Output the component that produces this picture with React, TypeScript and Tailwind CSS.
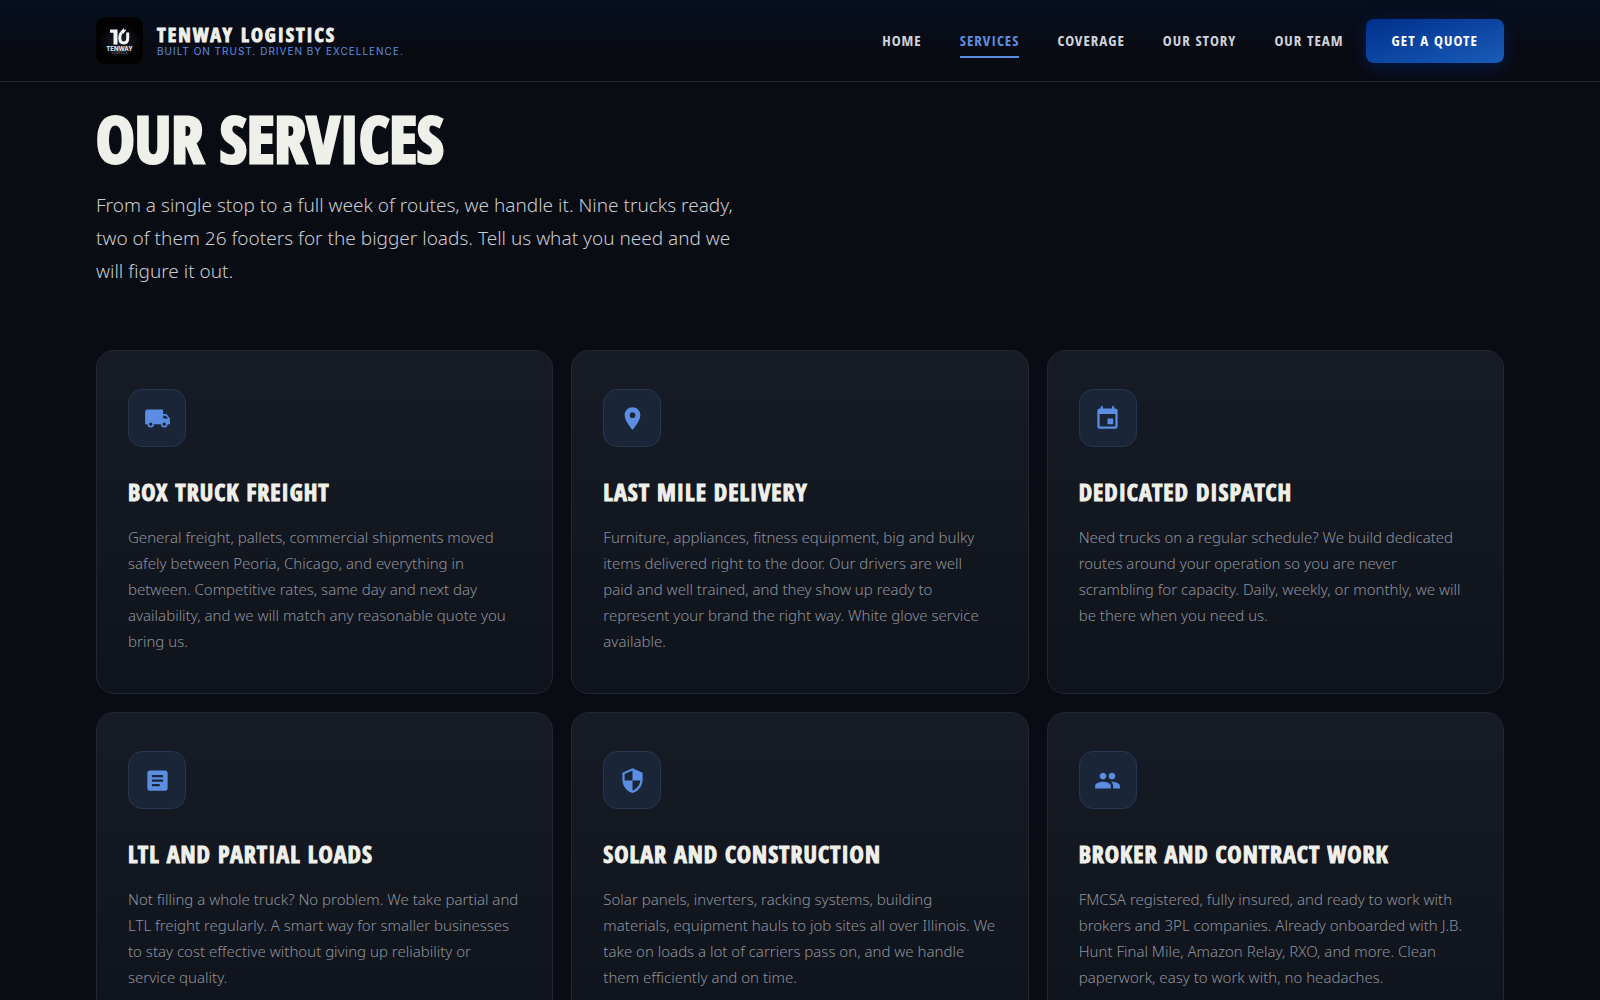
import type { IconType } from "react-icons";
import { MdArticle, MdEvent, MdLocalShipping, MdPeople, MdPlace, MdSecurity } from "react-icons/md";

interface Service {
  title: string;
  body: string;
  icon: IconType;
}

const NAV = ["Home", "Services", "Coverage", "Our Story", "Our Team"];
const ACTIVE = "Services";

const SERVICES: Service[] = [
  {
    title: "Box Truck Freight",
    icon: MdLocalShipping,
    body: "General freight, pallets, commercial shipments moved safely between Peoria, Chicago, and everything in between. Competitive rates, same day and next day availability, and we will match any reasonable quote you bring us.",
  },
  {
    title: "Last Mile Delivery",
    icon: MdPlace,
    body: "Furniture, appliances, fitness equipment, big and bulky items delivered right to the door. Our drivers are well\npaid and well trained, and they show up ready to represent your brand the right way. White glove service available.",
  },
  {
    title: "Dedicated Dispatch",
    icon: MdEvent,
    body: "Need trucks on a regular schedule? We build dedicated routes around your operation so you are never scrambling for capacity. Daily, weekly, or monthly, we will be there when you need us.",
  },
  {
    title: "LTL and Partial Loads",
    icon: MdArticle,
    body: "Not filling a whole truck? No problem. We take partial and LTL freight regularly. A smart way for smaller businesses to stay cost effective without giving up reliability or service quality.",
  },
  {
    title: "Solar and Construction",
    icon: MdSecurity,
    body: "Solar panels, inverters, racking systems, building materials, equipment hauls to job sites all over Illinois. We take on loads a lot of carriers pass on, and we handle them efficiently and on time.",
  },
  {
    title: "Broker and Contract Work",
    icon: MdPeople,
    body: "FMCSA registered, fully insured, and ready to work with brokers and 3PL companies. Already onboarded with J.B. Hunt Final Mile, Amazon Relay, RXO, and more. Clean paperwork, easy to work with, no headaches.",
  },
];

function Logo() {
  return (
    <svg viewBox="0 0 47 47" className="h-[47px] w-[47px] shrink-0" role="img" aria-label="Tenway Logistics">
      <defs>
        <radialGradient id="logo-glow">
          <stop offset="0" stopColor="#1d2230" />
          <stop offset="1" stopColor="#020203" />
        </radialGradient>
      </defs>
      <rect width="47" height="47" rx="9" fill="#020203" />
      <ellipse cx="24" cy="24" rx="21" ry="16" fill="url(#logo-glow)" />
      {/* emblem: post and open ring with an arrow tip */}
      <path d="M14 12.500h7.500V27.500h-4V15.700H14z" fill="#f4f4f4" />
      <path d="M25.500 15.500c-1.300 1.200-1.700 3-1.700 5.500 0 3.200 1.400 5 4 5s3.900-1.800 3.900-5v-5.500" fill="none" stroke="#f4f4f4" strokeWidth="3" />
      <path d="M24.500 14.500l3.500-3.500v1.800h2.500l-3.500 4.200z" fill="#f4f4f4" />
      <text x="23.500" y="33.500" textAnchor="middle" fontSize="6" className="font-['Inter',sans-serif] font-bold" fill="#f4f4f4">
        TENWAY
      </text>
      <text x="23.500" y="37" textAnchor="middle" fontSize="3" className="font-['Inter',sans-serif]" fill="#8d9099">
        LOGISTICS
      </text>
    </svg>
  );
}

function Header() {
  return (
    <header className="sticky top-0 z-10 border-b border-[#22262f] bg-linear-to-b from-[#050f20] to-[#090b13] to-60%">
      <div className="flex h-[81px] items-center justify-between px-[6%]">
        <a href="#home" className="flex items-center gap-3.5">
          <Logo />
          <span className="flex flex-col">
            <span className="font-['Open_Sans_Condensed',sans-serif] text-[20px] leading-5 font-bold tracking-[2px] text-[#f0f0ea] uppercase [-webkit-text-stroke:1px_#f0f0ea]">
              Tenway Logistics
            </span>
            <span className="font-['Inter',sans-serif] text-[10px] leading-3 tracking-[1px] text-[#5b8ee0] uppercase">
              Built on trust. Driven by excellence.
            </span>
          </span>
        </a>
        <div className="flex items-center gap-[22px]">
          <nav className="flex gap-[38px]">
            {NAV.map((item) => (
              <a
                key={item}
                href={`#${item.toLowerCase().replace(" ", "-")}`}
                className={`border-b-2 py-1.5 font-['Open_Sans_Condensed',sans-serif] text-[15px] leading-5 font-bold tracking-[1px] uppercase ${
                  item === ACTIVE ? "border-[#5b8ee0] text-[#5b8ee0]" : "border-transparent text-[#d0d3d9]"
                }`}
              >
                {item}
              </a>
            ))}
          </nav>
          <button className="h-11 rounded-lg bg-linear-to-br from-[#032f8d] to-[#1a5cb8] px-[26px] font-['Open_Sans_Condensed',sans-serif] text-[15px] font-bold tracking-[1px] text-white uppercase shadow-[0_4px_16px_rgba(0,51,153,0.4)]">
            Get a Quote
          </button>
        </div>
      </div>
    </header>
  );
}

function ServiceCard({ title, body, icon: Icon }: Service) {
  return (
    <article className="rounded-[18px] border border-[#222833] bg-linear-to-b from-[#171b25] to-[#0f131b] px-[31px] pt-[38px] pb-[39px]">
      <div className="flex h-[58px] w-[58px] items-center justify-center rounded-[14px] border border-[#26364f] bg-[#1a2538] text-[#5b8ee0]">
        <Icon size={27} />
      </div>
      <h2 className="mt-[31px] font-['Open_Sans_Condensed',sans-serif] text-2xl leading-7 font-bold tracking-[1px] text-[#f0f0ea] uppercase [-webkit-text-stroke:1px_#f0f0ea]">
        {title}
      </h2>
      <p className="mt-[18px] font-['Noto_Sans',sans-serif] text-[15px] leading-[26px] font-light whitespace-pre-line text-[#8d929c]">
        {body}
      </p>
    </article>
  );
}

export default function App() {
  return (
    <div className="min-h-screen bg-[#090c13]">
      <Header />
      <main className="px-[6%] pt-6 pb-24">
        <h1 className="font-['Open_Sans_Condensed',sans-serif] text-[65px] leading-[64px] font-bold text-[#f0f0ea] uppercase [-webkit-text-stroke:3px_#f0f0ea]">
          Our Services
        </h1>
        <p className="mt-[19px] max-w-[660px] font-['Noto_Sans',sans-serif] text-[19px] leading-[33px] font-light text-[#c8cbd0]">
          From a single stop to a full week of routes, we handle it. Nine trucks ready, two of them 26 footers for the
          bigger loads. Tell us what you need and we will figure it out.
        </p>
        <section className="mt-[62px] grid grid-cols-1 gap-[18px] md:grid-cols-2 lg:grid-cols-3">
          {SERVICES.map((service) => (
            <ServiceCard key={service.title} {...service} />
          ))}
        </section>
      </main>
    </div>
  );
}
